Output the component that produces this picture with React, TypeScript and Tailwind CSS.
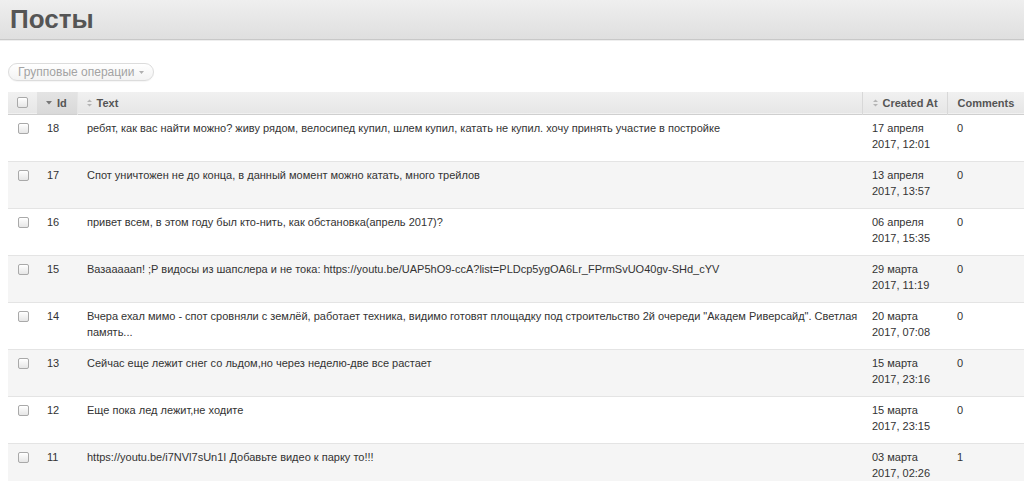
import { useState } from "react";

type Post = {
  id: number;
  text: string;
  date: string;
  time: string;
  comments: number;
};

const posts: Post[] = [
  { id: 18, text: "ребят, как вас найти можно? живу рядом, велосипед купил, шлем купил, катать не купил. хочу принять участие в постройке", date: "17 апреля", time: "2017, 12:01", comments: 0 },
  { id: 17, text: "Спот уничтожен не до конца, в данный момент можно катать, много трейлов", date: "13 апреля", time: "2017, 13:57", comments: 0 },
  { id: 16, text: "привет всем, в этом году был кто-нить, как обстановка(апрель 2017)?", date: "06 апреля", time: "2017, 15:35", comments: 0 },
  { id: 15, text: "Вазааааап! ;P видосы из шапслера и не тока: https://youtu.be/UAP5hO9-ccA?list=PLDcp5ygOA6Lr_FPrmSvUO40gv-SHd_cYV", date: "29 марта", time: "2017, 11:19", comments: 0 },
  { id: 14, text: "Вчера ехал мимо - спот сровняли с землёй, работает техника, видимо готовят площадку под строительство 2й очереди \"Академ Риверсайд\". Светлая память...", date: "20 марта", time: "2017, 07:08", comments: 0 },
  { id: 13, text: "Сейчас еще лежит снег со льдом,но через неделю-две все растает", date: "15 марта", time: "2017, 23:16", comments: 0 },
  { id: 12, text: "Еще пока лед лежит,не ходите", date: "15 марта", time: "2017, 23:15", comments: 0 },
  { id: 11, text: "https://youtu.be/i7NVl7sUn1I Добавьте видео к парку то!!!", date: "03 марта", time: "2017, 02:26", comments: 1 },
];

function Box() {
  return (
    <span className="inline-block w-[11px] h-[11px] rounded-[2px] border border-[#a9a9a9] bg-gradient-to-b from-white to-[#e6e6e6] shadow-[inset_0_1px_0_#fff]" />
  );
}

function SortBoth() {
  return (
    <svg width="5" height="8" viewBox="0 0 5 8" className="inline-block mr-[5px] align-[0px]">
      <path d="M0 3 L2.5 0.5 L5 3 Z" fill="#b5b5b5" />
      <path d="M0 5 L2.5 7.5 L5 5 Z" fill="#b5b5b5" />
    </svg>
  );
}

function SortDown() {
  return (
    <svg width="6" height="4" viewBox="0 0 6 4" className="inline-block mr-[5px] align-[2px]">
      <path d="M0 0 L6 0 L3 3.5 Z" fill="#777" />
    </svg>
  );
}

export default function App() {
  const [checked] = useState<number[]>([]);

  return (
    <div className="h-screen overflow-hidden bg-white font-['Liberation_Sans',Arial,sans-serif] text-[#333]">
      {/* Header */}
      <div className="h-[40px] bg-gradient-to-b from-[#efefef] to-[#dfdfdf] border-b border-[#c8c8c8] shadow-[0_1px_0_#eee]">
        <h1 className="pl-[10px] pt-[3px] text-[26px] leading-[32px] font-bold text-[#555]">Посты</h1>
      </div>

      <div className="pl-[8px] pt-[23px]">
        <div className="flex">
          <button className="flex items-center gap-[4px] h-[18px] px-[9px] rounded-full border border-[#dcdcdc] bg-gradient-to-b from-white to-[#f3f3f3] text-[12px] leading-[16px] text-[#a3a3a3] shadow-[0_1px_1px_rgba(0,0,0,0.04)]">
            Групповые операции
            <svg width="5" height="3" viewBox="0 0 5 3"><path d="M0 0 L5 0 L2.5 3 Z" fill="#b0b0b0" /></svg>
          </button>
        </div>

        <table className="mt-[11px] w-[1016px] table-fixed border-collapse text-[11px]">
          <colgroup>
            <col className="w-[29px]" />
            <col className="w-[40px]" />
            <col className="w-[785px]" />
            <col className="w-[85px]" />
            <col className="w-[77px]" />
          </colgroup>
          <thead>
            <tr className="h-[22px] bg-gradient-to-b from-[#f1f1f1] to-[#e6e6e6] border-b border-[#cfcfcf] font-bold text-[#555] text-left">
              <th className="pl-[9px] align-middle"><div className="flex items-center"><Box /></div></th>
              <th className="pl-[9px] bg-gradient-to-b from-[#e4e4e4] to-[#d9d9d9] border-r border-[#e6e6e6]"><SortDown />Id</th>
              <th className="pl-[9px] border-r border-[#d8d8d8]"><SortBoth />Text</th>
              <th className="pl-[10px] border-r border-[#d8d8d8]"><SortBoth />Created At</th>
              <th className="pl-[10px]">Comments</th>
            </tr>
          </thead>
          <tbody>
            {posts.map((p, i) => (
              <tr
                key={p.id}
                className={`border-b border-[#e4e4e4] align-top leading-[16px] ${i % 2 === 1 ? "bg-[#f5f5f5]" : "bg-white"}`}
              >
                <td className="pl-[10px] pt-[8px] pb-[5px]">
                  <div className="flex">{checked.includes(p.id) ? <Box /> : <Box />}</div>
                </td>
                <td className="pl-[10px] pt-[5px] pb-[9px] h-[47px]">{p.id}</td>
                <td className="pl-[10px] pr-[4px] pt-[5px] pb-[9px]">{p.text}</td>
                <td className="pl-[10px] pt-[5px] pb-[9px]">
                  <div>{p.date}</div>
                  <div>{p.time}</div>
                </td>
                <td className="pl-[10px] pt-[5px] pb-[9px]">{p.comments}</td>
              </tr>
            ))}
          </tbody>
        </table>
      </div>
    </div>
  );
}
